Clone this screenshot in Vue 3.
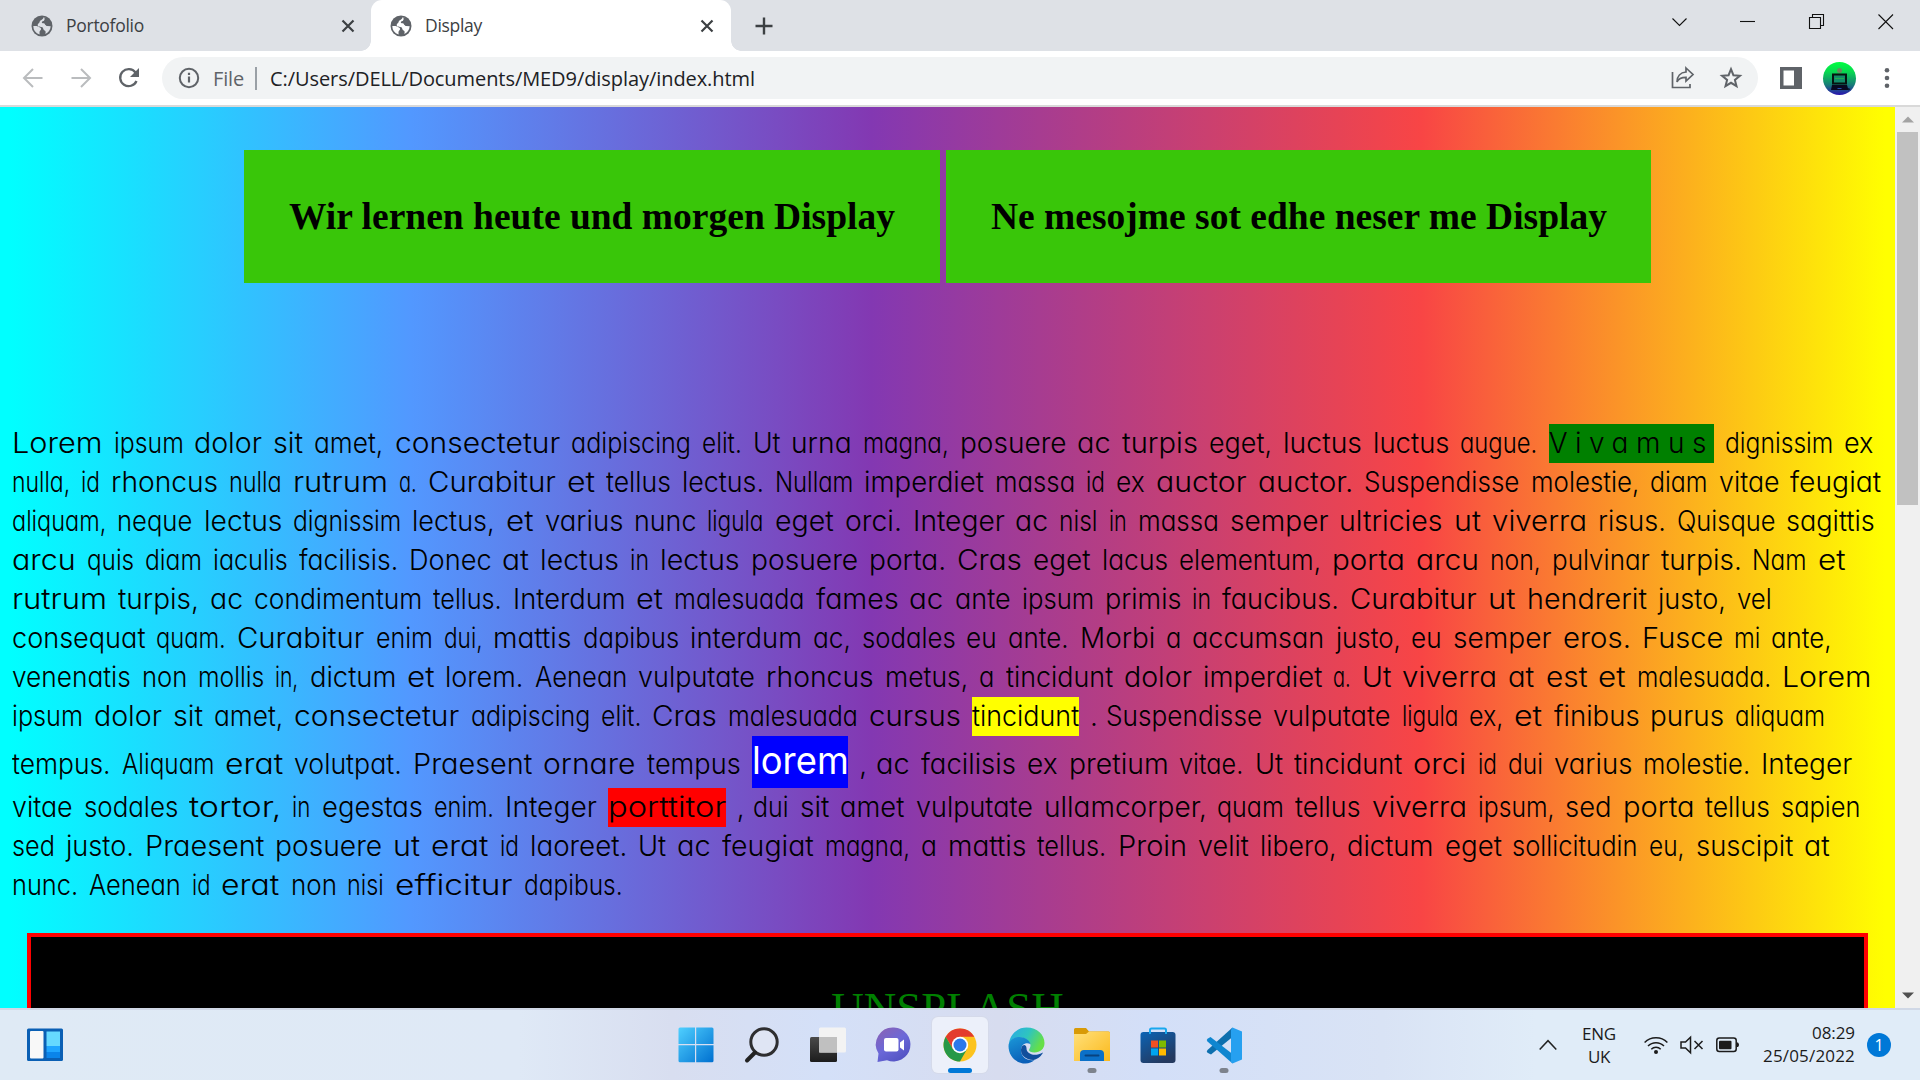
<script setup>
// Word positions on each line, in units of 960/1568 px. A leading marker selects the highlight style.
const UNIT = 960 / 1568
const GAP = 18
const marks = { '@': 'm-green', '~': 'm-yellow', '^': 'm-blue', '#': 'm-red' }

const source = [
  '20 Lorem 186 ipsum 318 dolor 447 sit 514 amet, 645 consectetur 933 adipiscing 1147 elit. 1230 Ut 1293 urna 1410 magna, 1568 posuere 1760 ac 1833 turpis 1975 eget, 2096 luctus 2243 luctus 2386 augue. 2530 @Vivamus 2818 dignissim 3013 ex 3079',
  '20 nulla, 133 id 182 rhoncus 375 nulla 479 rutrum 652 a. 699 Curabitur 926 et 990 tellus 1114 lectus. 1266 Nullam 1412 imperdiet 1626 massa 1775 id 1824 ex 1889 auctor 2055 auctor. 2229 Suspendisse 2501 molestie, 2696 diam 2808 vitae 2925 feugiat 3092',
  '20 aliquam, 192 neque 333 lectus 479 dignissim 674 lectus, 827 et 890 varius 1036 nunc 1156 ligula 1266 eget 1380 orci. 1491 Integer 1659 ac 1731 nisl 1812 in 1859 massa 2009 semper 2188 ultricies 2375 ut 2437 viverra 2610 risus. 2739 Quisque 2918 sagittis 3081',
  '20 arcu 142 quis 237 diam 348 iaculis 488 facilisis. 668 Donec 821 at 883 lectus 1030 in 1079 lectus 1227 posuere 1420 porta. 1564 Cras 1688 eget 1800 lacus 1926 elementum, 2176 porta 2313 arcu 2434 non, 2535 pulvinar 2713 turpis. 2863 Nam 2970 et 3033',
  '20 rutrum 193 turpis, 343 ac 415 condimentum 708 tellus. 838 Interdum 1040 et 1102 malesuada 1333 fames 1486 ac 1560 ante 1669 ipsum 1805 primis 1948 in 1997 faucibus. 2206 Curabitur 2431 ut 2494 hendrerit 2708 justo, 2837 vel 2912',
  '20 consequat 256 quam. 388 Curabitur 614 enim 725 dui, 806 mattis 952 dapibus 1127 interdum 1328 ac, 1408 sodales 1579 eu 1647 ante. 1764 Morbi 1905 a 1948 accumsan 2182 justo, 2306 eu 2374 semper 2553 eros. 2682 Fusce 2833 mi 2894 ante, 3011',
  '20 venenatis 232 non 324 mollis 450 in, 506 dictum 665 et 728 lorem. 874 Aenean 1043 vulputate 1252 rhoncus 1446 metus, 1600 a 1643 tincidunt 1836 dolor 1965 imperdiet 2178 a. 2225 Ut 2291 viverra 2464 at 2525 est 2611 et 2674 malesuada. 2911 Lorem 3075',
  '20 ipsum 154 dolor 283 sit 350 amet, 481 consectetur 769 adipiscing 982 elit. 1066 Cras 1190 malesuada 1420 cursus 1588 ~tincidunt 1781 . 1807 Suspendisse 2080 vulputate 2290 ligula 2400 ex, 2474 et 2538 finibus 2696 purus 2835 aliquam 3000',
  '20 tempus. 199 Aliquam 368 erat 481 volutpat. 675 Praesent 888 ornare 1057 tempus 1228 ^lorem 1404 , 1432 ac 1505 facilisis 1678 ex 1746 pretium 1927 vitae. 2050 Ut 2114 tincidunt 2309 orci 2414 id 2463 dui 2538 varius 2684 molestie. 2877 Integer 3044',
  '20 vitae 137 sodales 309 tortor, 478 in 526 egestas 709 enim. 825 Integer 993 #porttitor 1204 , 1231 dui 1307 sit 1373 amet 1496 vulputate 1705 ullamcorper, 1989 quam 2116 tellus 2241 viverra 2414 ipsum, 2557 sed 2651 porta 2786 tellus 2910 sapien 3058',
  '20 sed 108 justo. 237 Praesent 450 posuere 643 ut 705 erat 817 id 866 laoreet. 1043 Ut 1107 ac 1180 feugiat 1348 magna, 1505 a 1549 mattis 1695 tellus. 1826 Proin 1957 velit 2058 libero, 2201 dictum 2360 eget 2471 sollicitudin 2694 eu, 2770 suscipit 2947 at 3007',
  '20 nunc. 146 Aenean 314 id 362 erat 475 non 568 nisi 646 efficitur 856 dapibus. 1035',
]

const lines = source.map((row) => {
  const t = row.split(' ')
  const words = []
  for (let i = 0; i + 2 < t.length; i += 2) {
    const mark = marks[t[i + 1][0]]
    const advance = (t[i + 2] - t[i]) * UNIT
    words.push({
      text: mark ? t[i + 1].slice(1) : t[i + 1],
      mark,
      advance,
      width: Math.max(advance - GAP * UNIT, 4),
    })
  }
  return words
})

const measure = (el) => {
  const range = document.createRange()
  range.selectNodeContents(el)
  return range.getBoundingClientRect().width
}

// Spreads the letters of an element so that its text spans the given width.
const vFit = {
  mounted(el, { value }) {
    el.style.letterSpacing = (value - measure(el)) / el.textContent.trim().length + 'px'
  },
}

// Widens or narrows the glyphs of a word to the given width.
const vStretch = {
  mounted(el, { value }) {
    const text = el.textContent.trim()
    if (text.length === 1 && text !== 'a') return
    if (text === 'Vivamus') vFit.mounted(el, { value })
    else el.style.transform = `scaleX(${value / measure(el)})`
  },
}

const tabs = [
  { title: 'Portofolio', width: 78, active: false },
  { title: 'Display', width: 57, active: true },
]
</script>

<template>
  <div class="screen">
    <div class="tabstrip">
      <div v-for="tab in tabs" :key="tab.title" class="tab" :class="{ active: tab.active }">
        <svg class="globe" width="22" height="22" viewBox="0 0 22 22">
          <circle cx="11" cy="11" r="10.5" fill="#5f6368" />
          <path d="M2.300 11c1.500.2 3-.3 4.600.6 1.300.7 3.200.9 3.200 2.500 0 1.400-1.700 1.600-1.600 3.200l.1 2.200A9 9 0 0 1 2.300 11zM12.700 2.300c1.500.3 2.400.8 3.300 1.600-1 1-1.700.6-2.500 1.600-.7 1-2.600.4-2.700 1.900-.1 1.200 1.900.6 3 1 1.400.5.800 2.500 2.300 2.700l3.600.1c-.2 3.500-2.400 6.400-5.400 7.700.6-1.600.5-2.700-.7-3.300-1.700-.8-1-2.500-2.200-3.300-1.300-.7-3.500.2-4.400-1.200-.9-1.500.3-2.300 1-3 .9-.9.4-2 1.500-2.600 1.200-.7 2.600-1.200 3.200-3.200z" :fill="tab.active ? '#fff' : '#dee1e6'" />
          <path d="M13.200 2.100c2.900.5 5.500 2.800 6.500 6.400l-1.900 2.300c-1.200-.8-2.300.3-3.400-.7-.9-.8-.4-1.900-1.700-2.500-.9-.4-.9-1.300 0-1.700 1.200-.5 1-2.200.5-3.800z" fill="#5f6368" />
        </svg>
        <span class="tab-title"><span v-fit="tab.width">{{ tab.title }}</span></span>
        <svg class="tab-close" width="14" height="14" viewBox="0 0 14 14"><path d="M1.500 1.500l11 11M12.500 1.500l-11 11" stroke="#3c4043" stroke-width="2.200" /></svg>
      </div>
      <svg class="plus" width="18" height="18" viewBox="0 0 18 18"><path d="M9 .5v17M.5 9h17" stroke="#3c4043" stroke-width="2.400" /></svg>
      <svg class="controls" width="216" height="20" viewBox="0 0 216 20" fill="none" stroke="#111" stroke-width="1.100">
        <path d="M.5 6.500l7 7 7-7" />
        <path d="M68 9.500h15" />
        <path d="M137.500 5.500h11v11h-11zM140.500 5.500v-3h11v11h-3" />
        <path d="M206.500 2.500l14.500 14.500M221 2.500l-14.500 14.500" />
      </svg>
    </div>

    <div class="toolbar">
      <div class="nav">
        <svg width="22" height="22" viewBox="0 0 22 22" fill="none" stroke="#babcbe" stroke-width="2"><path d="M20.500 11H2.500M11 2l-9 9 9 9" /></svg>
        <svg width="22" height="22" viewBox="0 0 22 22" fill="none" stroke="#babcbe" stroke-width="2"><path d="M1.500 11h18M11 2l9 9-9 9" /></svg>
        <svg width="22" height="22" viewBox="0 0 22 22"><path d="M18.500 14A8.500 8.500 0 1 1 17.500 5.500" fill="none" stroke="#5f6368" stroke-width="2.300" /><path d="M21 1v9h-9z" fill="#5f6368" /></svg>
      </div>
      <div class="omnibox">
        <svg width="22" height="22" viewBox="0 0 22 22"><circle cx="11" cy="11" r="9.200" fill="none" stroke="#5f6368" stroke-width="2" /><path d="M11 9.500v6M11 5.800v2.200" stroke="#5f6368" stroke-width="2.200" /></svg>
        <span class="file"><span v-fit="31">File</span></span>
        <span class="sep"></span>
        <span class="url"><span v-fit="485">C:/Users/DELL/Documents/MED9/display/index.html</span></span>
        <svg class="share" width="24" height="24" viewBox="0 0 24 24" fill="none" stroke="#5f6368" stroke-width="1.700"><path d="M1.500 6v15.500H19V18" /><path d="M15 2l7 6.500-7 6.500v-3.700c-4 0-7.500 1.200-9 4.700 0-5.500 3.500-9.500 9-10z" stroke-linejoin="miter" /></svg>
        <svg class="star" width="24" height="24" viewBox="0 0 24 24"><path d="M12 3.200l2.400 6 6.500.5-5 4.200 1.600 6.300-5.500-3.400-5.500 3.400 1.600-6.300-5-4.200 6.500-.5z" fill="none" stroke="#5f6368" stroke-width="2" /></svg>
      </div>
      <svg class="panel" width="22" height="22" viewBox="0 0 22 22"><path d="M0 0h22v22H0zM3.500 3.500v15H14v-15z" fill="#5f6368" fill-rule="evenodd" /></svg>
      <svg class="avatar" width="33" height="33" viewBox="0 0 33 33">
        <defs><linearGradient id="av" x2="0" y2="1"><stop offset="0" stop-color="#00ff40" /><stop offset=".3" stop-color="#08d850" /><stop offset=".7" stop-color="#187a78" /><stop offset="1" stop-color="#2a12b0" /></linearGradient></defs>
        <circle cx="16.500" cy="16.500" r="16.500" fill="url(#av)" />
        <circle cx="16.500" cy="8.500" r="2.500" fill="#6b8a5c" />
        <path d="M9 11.500h15v11H9z" fill="#05130f" /><path d="M11 13.500h11v7H11z" fill="#128a68" /><path d="M12 16.500h9" stroke="#1fb04a" />
        <path d="M9 23h15l1.500 5H8z" fill="#080820" /><path d="M14.500 26.500h4" stroke="#2450b0" /><path d="M25 26l2.500 1-2 1.500z" fill="#071020" />
      </svg>
      <svg class="dots" width="6" height="22" viewBox="0 0 6 22" fill="#5f6368"><circle cx="3" cy="3.300" r="2.300" /><circle cx="3" cy="11" r="2.300" /><circle cx="3" cy="18.700" r="2.300" /></svg>
    </div>

    <div class="viewport">
      <div class="page">
        <div class="headings">
          <h2><span v-fit="606">Wir lernen heute und morgen Display</span></h2>
          <h2><span v-fit="616">Ne mesojme sot edhe neser me Display</span></h2>
        </div>
        <div class="para">
          <div v-for="(line, i) in lines" :key="i" class="line" :class="{ tall: i === 8 }">
            <span v-for="(w, j) in line" :key="j" class="slot" :style="{ width: w.advance + 'px' }"><span class="word" :class="w.mark" :style="{ width: w.width + 'px' }"><span v-stretch="w.width" class="glyphs">{{ w.text }}</span></span>{{ ' ' }}</span>
          </div>
        </div>
        <div class="box"><span>UNSPLASH</span></div>
      </div>
      <div class="scrollbar">
        <svg width="12" height="7" viewBox="0 0 12 7"><path d="M0 6.500L6 .5l6 6z" fill="#a3a3a3" /></svg>
        <div class="thumb"></div>
        <svg class="down" width="12" height="7" viewBox="0 0 12 7"><path d="M0 .5l6 6 6-6z" fill="#505050" /></svg>
      </div>
    </div>

    <div class="taskbar">
      <svg class="widgets" width="36" height="34" viewBox="0 0 36 34">
        <rect y=".5" width="36" height="32.500" rx="1.500" fill="#0a5fb4" /><rect x="3" y="3" width="13.500" height="27.500" rx="1" fill="#f8f8f8" />
        <path d="M19.500 3.500H33V18H19.500z" fill="#66d9ff" /><path d="M19.500 18H33v6H19.500z" fill="#1fa5ff" /><path d="M19.500 24H33v6H19.500z" fill="#0a84ea" />
      </svg>
      <div class="apps">
        <div class="app">
          <svg width="36" height="36" viewBox="0 0 36 36"><defs><linearGradient id="win" x2="1" y2="1"><stop stop-color="#4fd0ff" /><stop offset="1" stop-color="#0070d0" /></linearGradient></defs><path d="M2 .5h15V17H.5V2Q.5.500 2 .5zM18.200.5H34q1.500 0 1.500 1.500v15H18.200zM.5 18.200H17v17H2q-1.500 0-1.500-1.500zM18.200 18.200h17.300v15.500q0 1.500-1.500 1.500H18.200z" fill="url(#win)" /></svg>
        </div>
        <div class="app">
          <svg width="36" height="36" viewBox="0 0 36 36" fill="none"><circle cx="20" cy="15" r="13.200" fill="#dfe5f4" stroke="#2e2e30" stroke-width="3" /><path d="M11 25.500L3 33.500" stroke="#222" stroke-width="4" stroke-linecap="round" /></svg>
        </div>
        <div class="app">
          <svg width="36" height="36" viewBox="0 0 36 36"><defs><linearGradient id="tv" x2="0" y2="1"><stop stop-color="#4a4a4a" /><stop offset="1" stop-color="#1c1c1c" /></linearGradient></defs><rect y="10" width="27" height="25" rx="1.500" fill="url(#tv)" /><rect x="9" y=".5" width="27" height="25" rx="1.500" fill="#f3f3f3" /><path d="M9 10h18v15.500H9z" fill="#c0c0c0" /></svg>
        </div>
        <div class="app">
          <svg width="36" height="36" viewBox="0 0 36 36"><defs><linearGradient id="chat" x1=".1" x2=".8" y2="1"><stop stop-color="#8b62b4" /><stop offset=".5" stop-color="#6b68d8" /><stop offset="1" stop-color="#5050c0" /></linearGradient></defs><path d="M18 .5a17 17 0 1 1-7 32.700L1.500 35l1-8.500A17 17 0 0 1 18 .500z" fill="url(#chat)" /><rect x="8" y="11" width="14.500" height="13.500" rx="2" fill="#fff" /><path d="M24 15.500l4-3v11l-4-3z" fill="#fff" /></svg>
        </div>
        <div class="app current">
          <svg width="34" height="34" viewBox="0 0 34 34"><circle cx="17" cy="17" r="16.500" fill="#fcc31e" /><path d="M2.700 8.800A16.500 16.500 0 0 1 31.300 8.800H17L9.900 21.100z" fill="#e33b2e" /><path d="M2.700 8.800A16.500 16.500 0 0 0 17 33.500L24.100 21.100 9.900 21.100z" fill="#269847" /><circle cx="17" cy="17" r="8.200" fill="#fff" /><circle cx="17" cy="17" r="6.500" fill="#2b78ea" /></svg>
          <i class="bar"></i>
        </div>
        <div class="app">
          <svg width="37" height="37" viewBox="0 0 37 37"><defs><linearGradient id="eg" x2="1" y2=".4"><stop stop-color="#2aa8e8" /><stop offset=".55" stop-color="#2ec4c0" /><stop offset="1" stop-color="#65df48" /></linearGradient><linearGradient id="ed" x2=".4" y2="1"><stop stop-color="#1b98d8" /><stop offset="1" stop-color="#0a5fb8" /></linearGradient></defs><path d="M.8 18C1.500 7 9.500.5 18.500.5 29.500.5 36.500 8 36.500 16c0 6-4.500 9.500-10 9.500-3.500 0-5.500-1.200-5.500-2.500 0-1 1.500-2 1.500-4.500 0-4-4.500-8-10.500-8S2 13.500.8 18z" fill="url(#eg)" /><path d="M.5 19c.5-5.500 5-9 11-9 6.500 0 10.500 4 10.900 7-5-2-9.400 1-9.400 6 0 7 6.500 11.500 13.500 10-2.500 2.300-5.500 3.500-9 3.500C8 36.500.5 29 .5 19z" fill="url(#ed)" /><path d="M13.500 20c-2.500 7.500 4 13 12 13 5-1 8-4.500 9.500-7.500-9 5-17 1-16.500-4.500-.5-4-3.500-3.500-5-1z" fill="#114f9c" /></svg>
        </div>
        <div class="app">
          <svg width="36" height="36" viewBox="0 0 36 36"><defs><linearGradient id="fd" x2="1" y2="1"><stop stop-color="#ffe07a" /><stop offset="1" stop-color="#fbb91c" /></linearGradient></defs><path d="M0 2.500Q0 1 1.500 1H12l3 3.500h19.500q1.500 0 1.500 1.500v5H0z" fill="#d89a06" /><path d="M0 7h12l3-2.500h19.500Q36 4.500 36 6v28H0z" fill="url(#fd)" /><path d="M6 34v-7q0-4 4-4h16q4 0 4 4v7z" fill="#0b70c8" /><path d="M11.500 28.500h13" stroke="#08427f" stroke-width="2" stroke-linecap="round" /></svg>
          <i class="dot"></i>
        </div>
        <div class="app">
          <svg width="36" height="37" viewBox="0 0 36 37"><defs><linearGradient id="st" x2=".6" y2="1"><stop stop-color="#0b63b5" /><stop offset="1" stop-color="#24395f" /></linearGradient></defs><rect x=".5" y="5" width="35" height="31" rx="3" fill="url(#st)" /><path d="M10 7V3q0-1.500 1.500-1.500h13Q26 1.500 26 3v4" fill="none" stroke="#18a8ee" stroke-width="2" /><path d="M11 13.500h7v7h-7z" fill="#f25022" /><path d="M19 13.500h7v7h-7z" fill="#7fba00" /><path d="M11 21.500h7v7h-7z" fill="#00a4ef" /><path d="M19 21.500h7v7h-7z" fill="#ffb900" /></svg>
        </div>
        <div class="app">
          <svg width="36" height="37" viewBox="0 0 36 37"><path d="M26.500.5V10L5 27.500 1.500 25.800q-1.500-1.300 0-2.800z" fill="#0d6fae" /><path d="M4.500 10L1.500 11.700q-1.500 1.300 0 2.800L26.500 36.500V27z" fill="#0f86d0" /><path d="M26.500.5L36 4.500v28l-9.500 4-1.500-2V3z" fill="#26a0f0" /></svg>
          <i class="dot"></i>
        </div>
      </div>
      <div class="tray">
        <svg class="chev" width="18" height="12" viewBox="0 0 18 12"><path d="M.7 10.500L9 1.700l8.300 8.800" fill="none" stroke="#222" stroke-width="1.500" /></svg>
        <div class="lang"><div><span v-fit="34">ENG</span></div><div><span v-fit="22">UK</span></div></div>
        <svg class="wifi" width="24" height="20" viewBox="0 0 24 20" fill="none" stroke="#1b1b1b" stroke-width="1.500"><path d="M.6 7.500a16.200 16.200 0 0 1 22.800 0M4 11a11.300 11.300 0 0 1 16 0M7.300 14.200a6.700 6.700 0 0 1 9.400 0" /><circle cx="12" cy="17" r="2" fill="#1b1b1b" stroke="none" /></svg>
        <svg class="vol" width="24" height="18" viewBox="0 0 24 18" fill="none" stroke="#1b1b1b" stroke-width="1.500"><path d="M1 6h4.500L10.500 1.200v15.600L5.500 12H1zM14.500 5l8 8M22.500 5l-8 8" /></svg>
        <svg class="bat" width="24" height="16" viewBox="0 0 24 16"><rect x=".8" y="1" width="19.400" height="13.500" rx="2.500" fill="none" stroke="#1b1b1b" stroke-width="1.500" /><rect x="3" y="3.700" width="12.500" height="8.500" rx="1" fill="#1b1b1b" /><path d="M20.500 5.500h1.500q2 2.300 0 4.600h-1.500z" fill="#1b1b1b" /></svg>
        <div class="clock"><div><span v-fit="43">08:29</span></div><div><span v-fit="92">25/05/2022</span></div></div>
        <div class="badge">1</div>
      </div>
    </div>
  </div>
</template>

<style>
body { margin: 0; overflow: hidden; }
</style>

<style scoped>
.screen { width: 1920px; height: 1080px; overflow: hidden; display: flex; flex-direction: column; font-family: "Open Sans", "Noto Sans", sans-serif; color: #202124; white-space: nowrap; }
.screen svg { display: block; flex: none; overflow: visible; }
.tabstrip { height: 51px; background: #dee1e6; display: flex; align-items: center; font-size: 17.5px; color: #3c4043; }
.tab { width: 360px; height: 51px; box-sizing: border-box; display: flex; align-items: center; padding: 0 17px 0 19px; }
.tab:first-child { width: 371px; padding: 0 16px 0 31px; }
.tab.active { background: #fff; border-radius: 11px 11px 0 0; position: relative; }
.tab.active::before, .tab.active::after { content: ""; position: absolute; bottom: 0; width: 10px; height: 10px; }
.tab.active::before { left: -10px; background: radial-gradient(circle at 0 0, transparent 9.5px, #fff 10px); }
.tab.active::after { right: -10px; background: radial-gradient(circle at 100% 0, transparent 9.5px, #fff 10px); }
.tab-title { flex: 1; margin-left: 13px; padding-bottom: 1px; }
.plus { margin-left: 24px; }
.controls { margin: -8px 32px 0 auto; }
.toolbar { height: 54px; background: #fff; display: flex; align-items: center; border-bottom: 2px solid #d9d9d9; font-size: 20px; }
.nav { display: flex; gap: 26px; width: 140px; margin-left: 22px; }
.omnibox { width: 1596px; height: 42px; border-radius: 21px; background: #f1f3f4; display: flex; align-items: center; box-sizing: border-box; padding: 0 15px 0 16px; }
.file { width: 31px; margin-left: 13px; color: #5f6368; }
.sep { width: 2px; height: 23px; background: #9aa0a6; margin: 0 13px 0 11px; }
.url { flex: 1; }
.star { margin-left: 24px; }
.panel { margin-left: 22px; }
.avatar { margin-left: 21px; }
.dots { margin-left: 28px; }
.viewport { height: 901px; display: flex; overflow: hidden; }
.page { width: 1895px; height: 901px; overflow: hidden; color: #000; background: linear-gradient(90deg, #00ffff 0.5%, #5298ff 21.700%, #8338b2 46%, #f84545 75%, #ffff00 99.500%); }
.headings { display: flex; justify-content: center; gap: 6px; margin-top: 43px; }
h2 { margin: 0; padding: 45px; background: #39c609; font: bold 37.5px/43px "Liberation Serif", serif; height: 43px; }
h2:first-child { width: 606px; }
h2:last-child { width: 615px; }
.para { margin: 141px 0 0 12px; font: 300 28px/39px Inter, sans-serif; font-feature-settings: "cv11"; }
.line { display: flex; height: 39px; }
.line.tall { height: 52px; line-height: 56px; }
.slot { flex: none; white-space: pre; }
.word { display: inline-block; }
.glyphs { display: inline-block; transform-origin: 0 50%; }
.m-green { background: #008000; }
.m-yellow { background: #ff0; }
.m-red { background: #f00; }
.m-blue { background: #00f; color: #fff; font-size: 37.5px; height: 52px; line-height: 50px; font-weight: 400; }
.box { margin: 28px 27px 0; height: 200px; border: 4px solid #f00; background: #000; color: #008000; text-align: center; padding-top: 45px; font: 45px/52px "Liberation Serif", serif; }
.scrollbar { width: 25px; background: #f0f0f0; display: flex; flex-direction: column; align-items: center; padding-top: 9px; box-sizing: border-box; }
.thumb { width: 21px; height: 373px; background: #c1c1c1; margin-top: 9px; }
.down { margin: auto 0 9px; }
.taskbar { height: 72px; box-sizing: border-box; border-top: 2px solid #d0d8e6; display: flex; align-items: center; background: linear-gradient(90deg, #dfeaf5 0, #dfe9f6 27%, #d8def0 35%, #d4e0f8 43%, #d7dcef 52%, #d3dff8 60%, #d9e3f5 72%, #e0ecf8 80%, #e0ecf8 100%); color: #1b1b1b; font-size: 17px; }
.widgets { margin-left: 27px; }
.apps { display: flex; margin-left: 600px; }
.app { width: 66px; height: 56px; display: flex; align-items: center; justify-content: center; position: relative; }
.app.current { width: 56px; margin: 0 5px; background: #ecf0fa; border-radius: 6px; box-shadow: 0 0 0 1px #d5daea; }
.bar, .dot { position: absolute; bottom: 0; height: 5px; border-radius: 3px; left: 50%; transform: translateX(-50%); }
.bar { width: 24px; background: #0078d7; }
.dot { width: 9px; background: #7d838d; }
.tray { display: flex; align-items: center; margin-left: 282px; }
.lang { width: 36px; margin-left: 24px; text-align: center; line-height: 23px; padding-bottom: 1px; }
.wifi { margin-left: 27px; }
.vol { margin-left: 12px; }
.bat { margin-left: 12px; }
.clock { width: 95px; margin-left: 20px; text-align: right; line-height: 23px; padding-bottom: 2px; }
.badge { width: 24px; height: 24px; border-radius: 50%; background: #0078d7; color: #fff; margin-left: 12px; text-align: center; font-size: 16px; line-height: 24px; }
</style>
